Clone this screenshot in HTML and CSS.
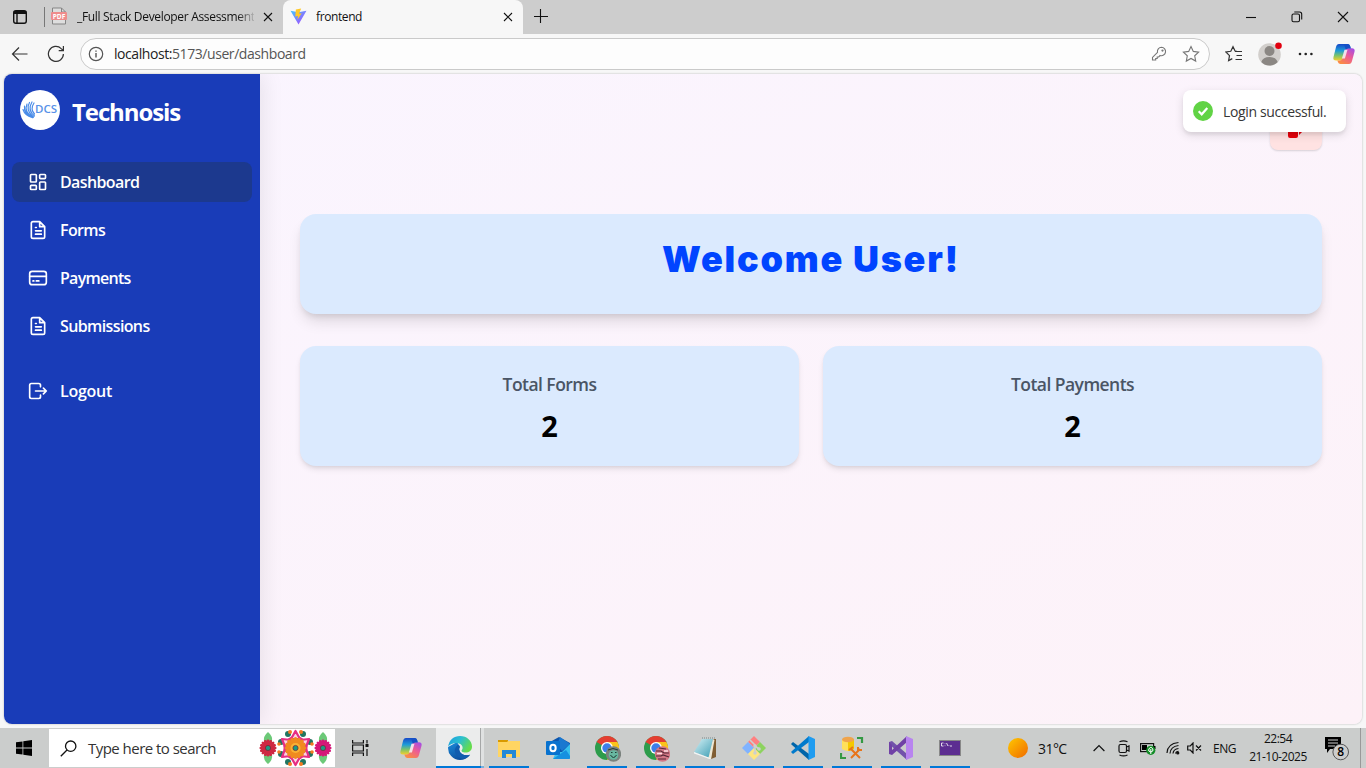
FILE: index.html
```html
<!DOCTYPE html>
<html lang="en">
<head>
<meta charset="utf-8">
<title>frontend</title>
<link rel="stylesheet" href="styles.css">
</head>
<body>
<svg class="defs" aria-hidden="true">
  <defs>
    <linearGradient id="cpTop" x1="0" y1="0" x2="0" y2="1"><stop offset="0" stop-color="#1748c8"/><stop offset=".4" stop-color="#1d9bd8"/><stop offset=".7" stop-color="#7cc36a"/><stop offset="1" stop-color="#f5cf2c"/></linearGradient>
    <linearGradient id="cpBot" x1="1" y1="0" x2=".3" y2="1"><stop offset="0" stop-color="#9a4cf0"/><stop offset=".5" stop-color="#ec5a97"/><stop offset="1" stop-color="#fb8b45"/></linearGradient>
    <linearGradient id="vite" x1="0" y1="0" x2="1" y2="1"><stop offset="0" stop-color="#41c8ff"/><stop offset="1" stop-color="#b23cff"/></linearGradient>
    <linearGradient id="edgeA" x1="0" y1="0" x2="1" y2=".5"><stop offset="0" stop-color="#1a9be0"/><stop offset=".5" stop-color="#2bbfd0"/><stop offset="1" stop-color="#65dc4c"/></linearGradient>
    <linearGradient id="edgeB" x1="0" y1="0" x2=".5" y2="1"><stop offset="0" stop-color="#1b8cdc"/><stop offset="1" stop-color="#0c4f9e"/></linearGradient>
    <linearGradient id="sun" x1="0" y1="0" x2="1" y2="1"><stop offset="0" stop-color="#ffc800"/><stop offset="1" stop-color="#f06a00"/></linearGradient>
    <linearGradient id="note" x1="0" y1="0" x2="1" y2="1"><stop offset="0" stop-color="#d5f1f6"/><stop offset="1" stop-color="#3e9eb4"/></linearGradient>
    <symbol id="copilot" viewBox="0 0 24 24">
      <path fill="url(#cpTop)" d="M7 2h8.500q2 0 2.600 2l.7 2.500h-2.600q-2 0-2.600 2l-2.400 8q-.6 2-2.500 2H4.200Q.6 18.500 1.500 15L4 5q.7-3 3-3z"/>
      <path fill="url(#cpBot)" d="M17 22H8.500q-2 0-2.600-2l-.5-1.600h2.500q2 0 2.600-2l2.400-8q.6-2.200 2.600-2.200h4.300q3.600 0 2.700 3.600L20 19q-.7 3-3 3z"/>
      <path fill="#1650c6" d="M12 2h3.500q2 0 2.600 2l.7 2.500h-2.600q-1.700 0-2.400 1.500z"/>
      <path fill="#f7f7f7" d="M12.500 7.700h3l-2.600 8.800h-3z" opacity=".85"/>
    </symbol>
    <symbol id="chrome" viewBox="0 0 24 24">
      <circle cx="12" cy="12" r="12" fill="#2d9c4b"/>
      <path fill="#e43e31" d="M12 12 1.600 6A12 12 0 0 1 22.400 6H12z"/>
      <path fill="#fbc31b" d="M12 6h10.400A12 12 0 0 1 12 24l5.200-9z"/>
      <circle cx="12" cy="12" r="6" fill="#fff"/><circle cx="12" cy="12" r="4.700" fill="#3d7ee9"/>
    </symbol>
    <symbol id="petal" viewBox="0 0 20 20">
      <g stroke="currentColor" stroke-width="3" stroke-linecap="round"><path d="M10 2v16M2 10h16M4.300 4.300l11.400 11.400M15.700 4.300 4.300 15.700M7 2.600l6 14.800M13 2.600 7 17.400M2.600 7l14.800 6M2.600 13l14.800-6"/></g>
    </symbol>
    <symbol id="file" viewBox="0 0 24 24"><path d="M14 2H6a2 2 0 0 0-2 2v16a2 2 0 0 0 2 2h12a2 2 0 0 0 2-2V8zM14 2v6h6M9 9h1M9 13h7M9 17h7"/></symbol>
  </defs>
</svg>

<header class="tabs">
  <svg class="tab-menu" width="16" height="16" viewBox="0 0 16 16" fill="none" stroke="#111" stroke-width="1.400"><rect x="1.700" y="1.700" width="12.600" height="12.600" rx="2.200"/><path d="M1.700 3.500h12.600" stroke-width="3"/><path d="M5 3v11"/></svg>
  <i class="tab-line"></i>
  <div class="tab">
    <svg width="16" height="18" viewBox="0 0 16 18"><path d="M1.500 1h9L14.500 5v12h-13z" fill="#dedede" stroke="#858585"/><path d="M10.500 1v4h4" fill="none" stroke="#858585"/><rect y="5" width="16" height="8" rx="1" fill="#ee8c8c"/><text class="pdf-label" x="8" y="11.500" text-anchor="middle">PDF</text></svg>
    <span class="tab-title faded">_Full Stack Developer Assessment</span>
    <svg class="x" width="10" height="10" viewBox="0 0 10 10"><path d="M1 1l8 8M9 1 1 9"/></svg>
  </div>
  <div class="tab active">
    <svg width="17" height="17" viewBox="0 0 32 32"><path d="M1 5 16 31 31 5 16 8z" fill="url(#vite)"/><path d="M21 1 11 3l-1 13 5-1-1 7 8-12-5 1z" fill="#ffc928"/></svg>
    <span class="tab-title front">frontend</span>
    <svg class="x" width="10" height="10" viewBox="0 0 10 10"><path d="M1 1l8 8M9 1 1 9"/></svg>
  </div>
  <svg class="plus" width="14" height="14" viewBox="0 0 14 14"><path d="M6.500 0v14M0 7.500h14"/></svg>
  <div class="window-buttons">
    <svg width="12" height="12" viewBox="0 0 12 12"><path d="M1 6.500h10"/></svg>
    <svg width="12" height="12" viewBox="0 0 12 12"><rect x="1" y="3" width="7.500" height="7.800" rx="1.500"/><path d="M3.300 1h5.200q2.200 0 2.200 2.200v5.300"/></svg>
    <svg width="12" height="12" viewBox="0 0 12 12"><path d="M1 1l10 10M11 1 1 11"/></svg>
  </div>
</header>

<nav class="toolbar">
  <svg width="18" height="16" viewBox="0 0 18 16" class="line"><path d="M1.500 8H16.500M8 1.500 1.500 8 8 14.500"/></svg>
  <svg class="reload line" width="18" height="18" viewBox="0 0 18 18"><path d="M16.400 9a7.500 7.500 0 1 1-2.200-5.400L16.300 5.500M16.400 1v4.700h-4.700"/></svg>
  <div class="address">
    <svg width="16" height="16" viewBox="0 0 16 16" fill="none" stroke="#555" stroke-width="1.200"><circle cx="8" cy="8" r="6.700"/><path d="M8 7v4.500M8 4.500v1.300" stroke-width="1.400"/></svg>
    <span class="url">localhost:<em>5173/user/dashboard</em></span>
    <svg class="key gray" width="16" height="16" viewBox="0 0 16 16"><path d="M10.500 1.300a4.200 4.200 0 1 1-1.400 8.200L7.700 11H6.200v1.500H4.700V14H1.500v-2.600l5-5a4.200 4.200 0 0 1 4-5.100z"/><circle cx="11.500" cy="4.600" r=".6"/></svg>
    <svg class="gray" width="18" height="18" viewBox="0 0 18 18"><path d="m9 1.500 2.300 4.900 5.300.7-3.900 3.700 1 5.300L9 13.500l-4.700 2.600 1-5.300L1.400 7.100l5.300-.7z"/></svg>
  </div>
  <svg class="favs line" width="18" height="18" viewBox="0 0 18 18"><path d="M11.300 6.500H17M11.500 10.500H17M10.500 14.500H17M10.200 6.300 8 1.700 5.800 6.300.9 7l3.600 3.600-.9 5 3.700-2M10 6.300h2"/></svg>
  <svg class="profile" width="26" height="24" viewBox="0 0 26 24"><circle cx="11.500" cy="12.500" r="11.300" fill="#d2cfcc"/><circle cx="11.500" cy="9" r="5" fill="#8b8783"/><path d="M3.300 20q1.700-5 8.200-5t8.200 5a11.300 11.300 0 0 1-16.400 0z" fill="#8b8783"/><circle cx="20.500" cy="3.700" r="3.300" fill="#e1000f"/></svg>
  <svg class="dots" width="16" height="4" viewBox="0 0 16 4"><circle cx="2" cy="2" r="1.300"/><circle cx="7.700" cy="2" r="1.300"/><circle cx="13.400" cy="2" r="1.300"/></svg>
  <svg class="assist" width="24" height="24"><use href="#copilot"/></svg>
</nav>

<div class="viewport">
  <aside class="sidebar">
    <div class="brand">
      <svg width="40" height="40" viewBox="0 0 40 40"><circle cx="20" cy="20" r="20" fill="#fff"/><g fill="none" stroke="#4a8ce8" stroke-width="1.200" stroke-linecap="round"><path d="M12 12Q7 20 14.500 26M9.500 12.500Q5 20 13.500 27M7 14Q3.500 22 13 27.500M4.500 16Q3.500 23 12.500 27.700M3 19.500q2 6 9 8M14 13q-4 6 .5 11"/></g><text class="logo-text" x="15" y="23.300" textLength="22" lengthAdjust="spacingAndGlyphs">DCS</text></svg>
      <span>Technosis</span>
    </div>
    <div class="menu">
      <a class="item current"><svg viewBox="0 0 24 24"><rect x="3" y="3" width="7" height="9" rx="1"/><rect x="14" y="3" width="7" height="5" rx="1"/><rect x="14" y="12" width="7" height="9" rx="1"/><rect x="3" y="16" width="7" height="5" rx="1"/></svg><span>Dashboard</span></a>
      <a class="item"><svg><use href="#file"/></svg><span>Forms</span></a>
      <a class="item"><svg viewBox="0 0 24 24"><rect x="2" y="4" width="20" height="16" rx="3"/><path d="M2 10h20M6 15.500h1M10 15.500h3"/></svg><span class="tight">Payments</span></a>
      <a class="item"><svg><use href="#file"/></svg><span>Submissions</span></a>
      <a class="item leave"><svg viewBox="0 0 24 24"><path d="M15 7V5a2 2 0 0 0-2-2H4a2 2 0 0 0-2 2v14a2 2 0 0 0 2 2h9a2 2 0 0 0 2-2v-2M9 12h13M18.500 8.500 22 12l-3.500 3.500"/></svg><span class="wide">Logout</span></a>
    </div>
  </aside>
  <main class="content">
    <div class="top"><button class="exit"><svg width="20" height="20" viewBox="0 0 20 20"><path d="M2 2h10v3H8v7h4v4q0 2-2 2H4q-2 0-2-2z"/><path d="M8 8h5V4l6 5-6 6v-3H8z"/></svg></button></div>
    <section class="welcome"><h1>Welcome User!</h1></section>
    <div class="stats">
      <section class="stat"><h2>Total Forms</h2><strong>2</strong></section>
      <section class="stat"><h2>Total Payments</h2><strong>2</strong></section>
    </div>
  </main>
  <div class="toast"><svg width="20" height="20" viewBox="0 0 20 20"><circle cx="10" cy="10" r="10" fill="#61d345"/><path d="m5.700 10.300 3 3 5.600-6.300" fill="none" stroke="#fff" stroke-width="2.200"/></svg><span>Login successful.</span></div>
</div>

<footer class="taskbar">
  <div class="start"><svg width="16" height="16" viewBox="0 0 16 16"><path d="M0 2.300 6.500 1.400V7.600H0zM7.300 1.300 16 0v7.600H7.300zM0 8.400h6.500v6.200L0 13.700zM7.300 8.400H16V16l-8.700-1.300z"/></svg></div>
  <div class="search">
    <svg width="17" height="17" viewBox="0 0 17 17" fill="none" stroke="#111" stroke-width="1.300"><circle cx="10.700" cy="6.200" r="5.200"/><path d="M7 10 .8 16.200"/></svg>
    <span>Type here to search</span>
    <svg class="flowers" width="76" height="38" viewBox="0 0 76 38">
      <g fill="#6cc978"><path d="M9 3q5 4 4 10H5Q4 7 9 3zM9 35q5-4 4-10H5q-1 6 4 10zM64 3q5 4 4 10h-8q-1-6 4-10zM64 35q5-4 4-10h-8q-1 6 4 10z"/></g>
      <svg class="red" x="0" y="10" width="18" height="18"><use href="#petal"/></svg>
      <svg class="pink" x="55" y="10" width="18" height="18"><use href="#petal"/></svg>
      <g fill="#217561"><circle cx="22" cy="13" r="3"/><circle cx="22" cy="25" r="3"/><circle cx="51" cy="13" r="3"/><circle cx="51" cy="25" r="3"/><circle cx="29" cy="5" r="3"/><circle cx="44" cy="5" r="3"/><circle cx="29" cy="33" r="3"/><circle cx="44" cy="33" r="3"/></g>
      <g fill="#f47a20"><circle cx="20" cy="15" r="1.800"/><circle cx="20" cy="23" r="1.800"/><circle cx="53" cy="15" r="1.800"/><circle cx="53" cy="23" r="1.800"/><circle cx="31" cy="3" r="2"/><circle cx="42" cy="3" r="2"/><circle cx="31" cy="35" r="2"/><circle cx="42" cy="35" r="2"/></g>
      <circle cx="36.500" cy="19" r="12" fill="#e62e83"/>
      <g fill="#fbd3e4" stroke="#e62e83" stroke-width="2.200" stroke-linejoin="round"><path d="m36.500 2 4.500 8h-9zM36.500 36l4.500-8h-9zM23 10l9 1-6 7zM50 10l-9 1 6 7zM23 28l9-1-6-7zM50 28l-9-1 6-7z"/></g>
      <svg class="orange" x="25" y="7.500" width="23" height="23"><use href="#petal"/></svg>
      <circle cx="36.500" cy="19" r="5" fill="#f9b234"/>
      <g fill="#1c9b83" stroke="#7c1d31" stroke-width=".7"><circle cx="9" cy="19" r="2.600"/><circle cx="64" cy="19" r="2.600"/><circle cx="36.500" cy="19" r="2.600"/></g>
    </svg>
  </div>
  <div class="cell view"><svg width="17" height="16" viewBox="0 0 17 16" fill="none" stroke="#111" stroke-width="1.200"><path d="M.6 0v3h10.800V0M.6 16v-3h10.800v3M.6 5h10.800v6H.6zM15 0v3.500M15 9v7"/><path d="M13.500 4h3v3h-3z" fill="#111" stroke="none"/></svg></div>
  <div class="cell cop"><svg width="24" height="24"><use href="#copilot"/></svg></div>
  <div class="cell edge"><svg width="24" height="24" viewBox="0 0 24 24"><path fill="url(#edgeB)" d="M.1 11A12 12 0 0 0 12 24q6 0 10-5-5 1-8-1-4-3-2-7L9 6z"/><path fill="url(#edgeA)" d="M.2 10.500C1 4 6 0 12 0c7 0 12 5 12 10.500 0 4-3 6-6.500 6-3 0-4.800-1.200-3.500-2.700 2-3-1-6.800-5.600-6.800Q3 7 .2 10.500z"/><path fill="#105cae" d="M9.500 9q-4.500 4.500-1.500 9.500 3.500 5 9 4Q20 21.300 22.200 18.500q-4.500 1.800-8-.2-4.700-2.800-2.400-8.300-1-.9-2.300-1z"/></svg></div>
  <div class="cell run"><svg width="24" height="24" viewBox="0 0 24 24"><path d="M1 4h10v4H1z" fill="#d89a00"/><path d="M1 6h9l1-1h12v16H1z" fill="#ffd562"/><path d="M5 14h14v8h-4v-4H9v4H5z" fill="#2389d7"/></svg></div>
  <div class="cell"><svg width="24" height="24" viewBox="0 0 24 24"><path d="m4 6 9-5 11 6v9H5z" fill="#0b55ae"/><path d="M14 1 24 8l-8 7-5-6z" fill="#1a78d0"/><path d="M24 8v14q0 1-1 1H7l3-7h6z" fill="#37bfed"/><path d="m7 23 13-9 4 6v2q0 1-1 1z" fill="#1590e0"/><rect y="5" width="14" height="14" rx="1" fill="#0872cf"/><ellipse cx="7" cy="12" rx="2.700" ry="3.200" fill="none" stroke="#fff" stroke-width="2"/></svg></div>
  <div class="cell run"><svg class="chrome" width="26" height="26" viewBox="0 0 26 26"><svg width="24" height="24"><use href="#chrome"/></svg><circle cx="18.500" cy="18" r="7.700" fill="#7b827e"/><circle cx="18.500" cy="19" r="4.800" fill="#67b7a0"/><path d="M15.500 19q3 5 6 0M16 16.500h1.500M20 16.500h1.500M13 14q5-3 10 0" fill="none" stroke="#223d36"/></svg></div>
  <div class="cell run"><svg class="chrome" width="26" height="26" viewBox="0 0 26 26"><svg width="24" height="24"><use href="#chrome"/></svg><circle cx="18.500" cy="18" r="7.700" fill="#d47786"/><path d="M12 15h5l3 2h5M12 20h5l2-1 6 2M15 12l7 1M14 23h8" fill="none" stroke="#552936" stroke-width="1.200"/><path d="M13 17.500h5M20 15h4" stroke="#ffe1e6" stroke-width="1.500"/></svg></div>
  <div class="cell run"><svg width="24" height="24" viewBox="0 0 24 24"><path d="M20 3h3v18l-5 2z" fill="#805d32"/><path d="m20 3 1.500 1L18 23l-4-1z" fill="#eee8d5"/><path d="M9 3h11l-4.500 18.500L1 16z" fill="url(#note)"/><path d="m1 16 14.500 5.500 2.500 1-1.500.5L1 17.500z" fill="#f2f5f5"/><path d="M9 2h13" stroke="#77898b" stroke-dasharray="1 1"/></svg></div>
  <div class="cell run"><svg width="24" height="24" viewBox="0 0 24 24"><path d="m12 0 6 6-6 6-6-6z" fill="#ff8080"/><path d="m6 6 6 6-6 6-6-6z" fill="#80b3ff"/><path d="m18 6 6 6-6 6-6-6z" fill="#8dd35f"/><path d="m12 12 6 6-6 6-6-6z" fill="#ffe680"/><path d="m8 4 5 5v8M13 10l4 3" fill="none" stroke="#cdd0cf" stroke-width="1.600"/><circle cx="13" cy="10" r="1.800" fill="#cdd0cf"/><circle cx="17" cy="13" r="1.800" fill="#cdd0cf"/><circle cx="13" cy="17" r="1.800" fill="#cdd0cf"/></svg></div>
  <div class="cell run"><svg width="24" height="24" viewBox="0 0 24 24"><path d="m0 8 2-2 16 12v6L1 9z" fill="#0065a9"/><path d="m0 16 2 2L18 6V0L1 15z" fill="#007acc"/><path d="m17.500 0 6.500 3v18l-6.500 3z" fill="#1f9cf0"/></svg></div>
  <div class="cell run"><svg width="24" height="24" viewBox="0 0 24 24"><path d="M2 3v10q6 4 12 0V3z" fill="#ffe05a"/><path d="M8 3h6v10q-3 2-6 2z" fill="#f5c800"/><ellipse cx="8" cy="3.500" rx="6" ry="2.800" fill="#efa44c"/><path d="M17 2h5v5M1 17v5h5" fill="none" stroke="#339943" stroke-width="2.200"/><path d="m11 13 9 9M20 13l-9 9M9 14l4-3M18 11v3h4" fill="none" stroke="#e87419" stroke-width="2"/></svg></div>
  <div class="cell run"><svg width="24" height="24" viewBox="0 0 24 24"><path d="m0 6 3-1 15 13v6L0 8z" fill="#7252aa"/><path d="M0 6v12l3 1L18 6V0L3 14V9z" fill="#7041a6"/><path d="m17 0 7 3v18l-7 3z" fill="#b884ef"/></svg></div>
  <div class="cell run"><svg width="22" height="16" viewBox="0 0 22 16"><rect x=".5" y=".5" width="21" height="15" fill="#5c2d91" stroke="#888"/><path d="M4.500 3h-2v3h2M6 3.500v.6M6 5.500v.6M7.500 3l1.500 3M10 5.500v.6M11 6h2" fill="none" stroke="#fff" stroke-width=".8"/></svg></div>
  <div class="tray">
    <svg class="sun" width="20" height="20" viewBox="0 0 20 20"><circle cx="10" cy="10" r="10" fill="url(#sun)"/></svg>
    <span class="temp">31°C</span>
    <svg class="chev ic" width="12" height="8" viewBox="0 0 12 8"><path d="m.6 7 5.400-5.500L11.400 7"/></svg>
    <svg class="cam ic" width="12" height="17" viewBox="0 0 12 17"><rect x="1" y="4.500" width="7.500" height="8" rx="1.500"/><path d="m8.500 7 2.500-1v5l-2.500-1M1.500 1.700q4-1.800 8 0M1.500 15q4 1.800 8 0"/></svg>
    <svg class="bat" width="16" height="14" viewBox="0 0 16 14"><rect x=".6" y="2.600" width="13" height="8" fill="none" stroke="#111" stroke-width="1.200"/><path d="M2 4h5v5H2zM14 5h1.500v3H14z"/><circle cx="10.800" cy="9.300" r="4.600" fill="#138d27"/><path d="M10.800 13V8M8.800 10V8l2-2 2 2v2l-2 1z" fill="none" stroke="#fff"/></svg>
    <svg class="wifi ic" width="14" height="14" viewBox="0 0 14 14"><path d="M1 12Q1.500 2.500 12.500 1.500M4 12.500q.5-7 8.500-8M7 12.500q.5-4.500 5.500-5M9.500 12.500q.5-2 3-2.200"/><circle cx="11.800" cy="12" r="1" fill="#111"/></svg>
    <svg class="vol ic" width="15" height="12" viewBox="0 0 15 12"><path d="M.7 4h2.600L6 1v10L3.300 8H.7zM9 3.500l5 5M14 3.500l-5 5"/></svg>
    <span class="lang">ENG</span>
    <div class="clock"><span class="time">22:54</span><span class="date">21-10-2025</span></div>
    <svg class="notice" width="25" height="26" viewBox="0 0 25 26"><path d="M0 2h16v12H5l-3 4v-4H0z"/><path d="M3 5h10M3 8h10M3 11h7" stroke="#cdcdcd" stroke-width="1.200"/><circle cx="15.700" cy="17" r="7.800" fill="#cdcdcd" stroke="#555" stroke-width="1"/><text class="badge" x="15.700" y="21.300" text-anchor="middle">8</text></svg>
  </div>
</footer>
</body>
</html>
```
FILE: styles.css
```css
* { box-sizing: border-box; }
body { margin: 0; width: 1366px; height: 768px; overflow: hidden; display: flex; flex-direction: column; background: #f7f7f7; color: #111; font-family: "Open Sans", "Noto Sans", sans-serif; }
svg { display: block; flex: none; }
span { white-space: nowrap; }
.defs { position: absolute; width: 0; height: 0; }

.tabs { height: 34px; flex: none; display: flex; align-items: center; background: #cdcdcd; padding-left: 12px; font-size: 12px; }
.tab-menu { margin-right: 16px; }
.tab-line { width: 1px; height: 20px; background: #777; }
.tab { display: flex; align-items: center; width: 238px; height: 34px; padding: 0 10px 2px 6px; }
.tab.active { width: 240px; background: #f7f7f7; border-radius: 8px 8px 0 0; padding-left: 7px; }
.tab-title { width: 180px; margin-left: 10px; overflow: hidden; letter-spacing: -.32px; }
.faded { width: 178px; margin-right: 9px; -webkit-mask-image: linear-gradient(90deg, #000 160px, transparent 180px); mask-image: linear-gradient(90deg, #000 160px, transparent 180px); }
.front { margin-left: 9px; letter-spacing: -.4px; }
.x, .plus { fill: none; stroke: #111; stroke-width: 1.1; }
.x { margin-top: 2px; }
.active .x { margin-left: auto; }
.plus { margin: -3px 0 0 11px; }
.window-buttons { display: flex; gap: 34px; margin-left: auto; margin-right: 17px; fill: none; stroke: #111; stroke-width: 1.1; }

.toolbar { height: 40px; flex: none; display: flex; align-items: center; padding-left: 11px; }
.line { fill: none; stroke: #333; stroke-width: 1.2; }
.reload { margin: 0 15px 0 18px; }
.address { width: 1130px; height: 32px; display: flex; align-items: center; padding: 0 9px 0 7px; background: #fdfdfd; border: 1px solid #cacaca; border-radius: 16px; }
.url { margin: -1px 0 0 10px; font-size: 14px; letter-spacing: -.43px; color: #222; }
.url em { font-style: normal; color: #555; }
.key { margin: 0 15px 0 auto; }
.gray { fill: none; stroke: #777; stroke-width: 1.1; }
.favs { margin-left: 15px; }
.profile { margin-left: 15px; }
.dots { margin-left: 14px; fill: #222; }
.assist { margin-left: 18px; }

.viewport { position: relative; width: 1358px; height: 650px; margin: 0 4px; display: flex; flex: none; overflow: hidden; border-radius: 8px; background: linear-gradient(to bottom right, #faf5ff, #fdf2f8); box-shadow: 0 0 2px #aaa; }
.sidebar { width: 256px; background: #193cb8; color: #fff; box-shadow: 4px 0 20px rgba(0,0,0,.08); }
.brand { display: flex; align-items: center; gap: 12px; padding: 16px; height: 72px; font-size: 24px; font-weight: 700; letter-spacing: -1.1px; }
.brand span { margin-top: 2px; }
.logo-text { font: 600 10px "Open Sans", sans-serif; fill: #5792e8; letter-spacing: 0; }
.menu { display: flex; flex-direction: column; gap: 8px; padding: 16px 8px; }
.item { height: 40px; display: flex; align-items: center; gap: 12px; padding: 0 16px; border-radius: 8px; font-size: 16px; font-weight: 600; letter-spacing: -.62px; }
.item svg { width: 20px; height: 20px; fill: none; stroke: #fff; stroke-width: 2; stroke-linecap: round; stroke-linejoin: round; }
.item .tight { letter-spacing: -.74px; }
.item .wide { letter-spacing: -.25px; }
.current { background: #1c398e; }
.leave { margin-top: 17px; }
.content { flex: 1; padding: 36px 40px; }
.top { display: flex; justify-content: flex-end; height: 104px; }
.exit { width: 52px; height: 40px; display: flex; align-items: center; justify-content: center; border: 0; border-radius: 8px; background: #ffe2e2; fill: #e7000b; box-shadow: 0 1px 2px rgba(0,0,0,.15); }
.welcome { height: 100px; border-radius: 16px; background: #dbeafe; box-shadow: 0 10px 15px -3px rgba(0,0,0,.12), 0 4px 6px -2px rgba(0,0,0,.1); text-align: center; padding-top: 23px; }
h1 { margin: 0; font: 900 36px/44px Inter, sans-serif; color: #04f; letter-spacing: 1.75px; }
.stats { display: grid; grid-template-columns: 1fr 1fr; gap: 24px; margin-top: 32px; }
.stat { height: 120px; border-radius: 16px; background: #dbeafe; box-shadow: 0 4px 6px -1px rgba(0,0,0,.1), 0 2px 4px -2px rgba(0,0,0,.1); text-align: center; padding-top: 24px; }
h2 { margin: 0; font-size: 17.500px; line-height: 28px; font-weight: 600; color: #4a5565; letter-spacing: -.55px; }
strong { display: block; font: 700 29px/36px "Open Sans", sans-serif; color: #000; margin-top: 10px; }
.toast { position: absolute; left: 1179px; top: 16px; width: 163px; height: 42px; display: flex; align-items: center; gap: 10px; padding: 0 10px; background: #fff; color: #363636; border-radius: 8px; font-size: 14px; box-shadow: 0 3px 10px rgba(0,0,0,.12), 0 3px 3px rgba(0,0,0,.05); }
.toast span { letter-spacing: -.36px; }

.taskbar { height: 40px; margin-top: 4px; flex: none; display: flex; background: #cbcdcc; }
.start { width: 49px; display: flex; align-items: center; justify-content: center; }
.start svg { margin-left: -1px; }
.search { width: 286px; height: 38px; margin-top: 1px; padding-left: 11px; display: flex; align-items: center; background: #fff; font-size: 15px; letter-spacing: -.53px; color: #333; }
.search span { width: 160px; margin-left: 11px; }
.flowers { margin-left: 11px; }
.red { color: #ce2842; } .pink { color: #d51778; } .orange { color: #f08a1f; }
.cell { width: 49px; display: flex; align-items: center; justify-content: center; position: relative; }
.chrome { margin: 2px 0 0 2px; }
.view { width: 51px; } .cop { width: 50px; }
.edge { width: 48px; background: linear-gradient(90deg, #ebecec 44px, #a5a7a7 44px 45px, #dfe1e1 45px); }
.edge::after, .run::after { content: ""; position: absolute; bottom: 0; left: 5px; width: 40px; height: 2px; background: #0078d7; }
.edge::after { left: 0; width: 48px; background: linear-gradient(90deg, #0078d7 45px, #77afdc 45px); }
.tray { flex: 1; display: flex; align-items: center; padding-left: 34px; border-right: 5px solid #cbcdcc; font-size: 12px; box-shadow: inset -1px 0 #999; }
.temp { width: 42px; margin-left: 10px; font-size: 14px; letter-spacing: -.55px; }
.ic { fill: none; stroke: #111; stroke-width: 1.2; }
.chev { margin-left: 13px; } .cam { margin-left: 13px; } .bat { margin-left: 10px; } .wifi { margin-left: 10px; } .vol { margin-left: 7px; }
.lang { width: 24px; margin-left: 11px; letter-spacing: -.5px; }
.clock { width: 60px; margin-left: 11px; height: 40px; display: flex; flex-direction: column; text-align: center; line-height: 18px; padding-top: 2px; letter-spacing: -.5px; }
.notice { margin-left: 17px; }
.badge { font: 600 12px "Open Sans", sans-serif; }
.pdf-label { font: 700 6.500px "Open Sans", sans-serif; fill: #fff; }
```
